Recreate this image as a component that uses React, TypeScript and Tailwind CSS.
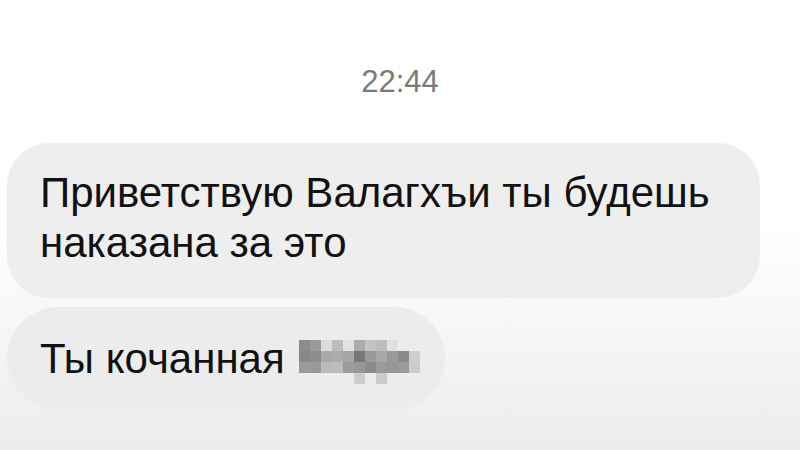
import React from 'react';

// censored word, drawn as a pixel mosaic
const cells: Array<[number, number, string]> = [
  [0, 0, '#8c8c8c'], [1, 0, '#9a9a9a'], [2, 0, '#dcdcdc'], [3, 0, '#bcbcbc'], [4, 0, '#e2e2e2'],
  [5, 0, '#acacac'], [6, 0, '#c4c4c4'], [7, 0, '#bdbdbd'], [8, 0, '#e0e0e0'],
  [0, 1, '#888888'], [1, 1, '#8c8c8c'], [2, 1, '#a9a9a9'], [3, 1, '#ababab'], [4, 1, '#a6a6a6'],
  [5, 1, '#777777'], [6, 1, '#999999'], [7, 1, '#a8a8a8'], [8, 1, '#999999'], [9, 1, '#8a8a8a'], [10, 1, '#cfcfcf'],
  [0, 2, '#9a9a9a'], [1, 2, '#999999'], [2, 2, '#bbbbbb'], [3, 2, '#bdbdbd'], [4, 2, '#9c9c9c'],
  [5, 2, '#989898'], [6, 2, '#8a8a8a'], [7, 2, '#9a9a9a'], [8, 2, '#979797'], [9, 2, '#9b9b9b'], [10, 2, '#cccccc'],
  [5, 3, '#cdcdcd'], [7, 3, '#cbcbcb'],
];

const Mosaic: React.FC = () => (
  <svg width="122" height="46" viewBox="0 0 122 46" className="ml-[14px] mt-[8px] shrink-0">
    {cells.map(([c, r, fill], i) => (
      <rect key={i} x={c * 11} y={r * 11} width="11" height="11" fill={fill} />
    ))}
  </svg>
);

const App: React.FC = () => {
  return (
    <div
      className="w-[800px] h-[450px] overflow-hidden bg-gradient-to-b from-white via-white to-[#ececec] flex flex-col"
      style={{ fontFamily: '"Liberation Sans", Arial, sans-serif' }}
    >
      {/* time */}
      <div className="pt-[64px] h-[143px] text-center text-[31px] leading-[36px] text-[#7a7a7a]">22:44</div>

      {/* bubbles */}
      <div className="pl-[7px] flex flex-col items-start gap-[9px]">
        <div className="w-[753px] h-[155px] rounded-[42px] bg-[#eeeeee] pl-[33px] pt-[25px] text-[42px] leading-[50px] text-[#111]">
          Приветствую Валагхъи ты будешь
          <br />
          наказана за это
        </div>
        <div className="w-[438px] h-[103px] rounded-full bg-[#ececec] pl-[33px] flex items-center text-[42px] text-[#111]">
          <span>Ты кочанная</span>
          <Mosaic />
        </div>
      </div>
    </div>
  );
};

export default App;
